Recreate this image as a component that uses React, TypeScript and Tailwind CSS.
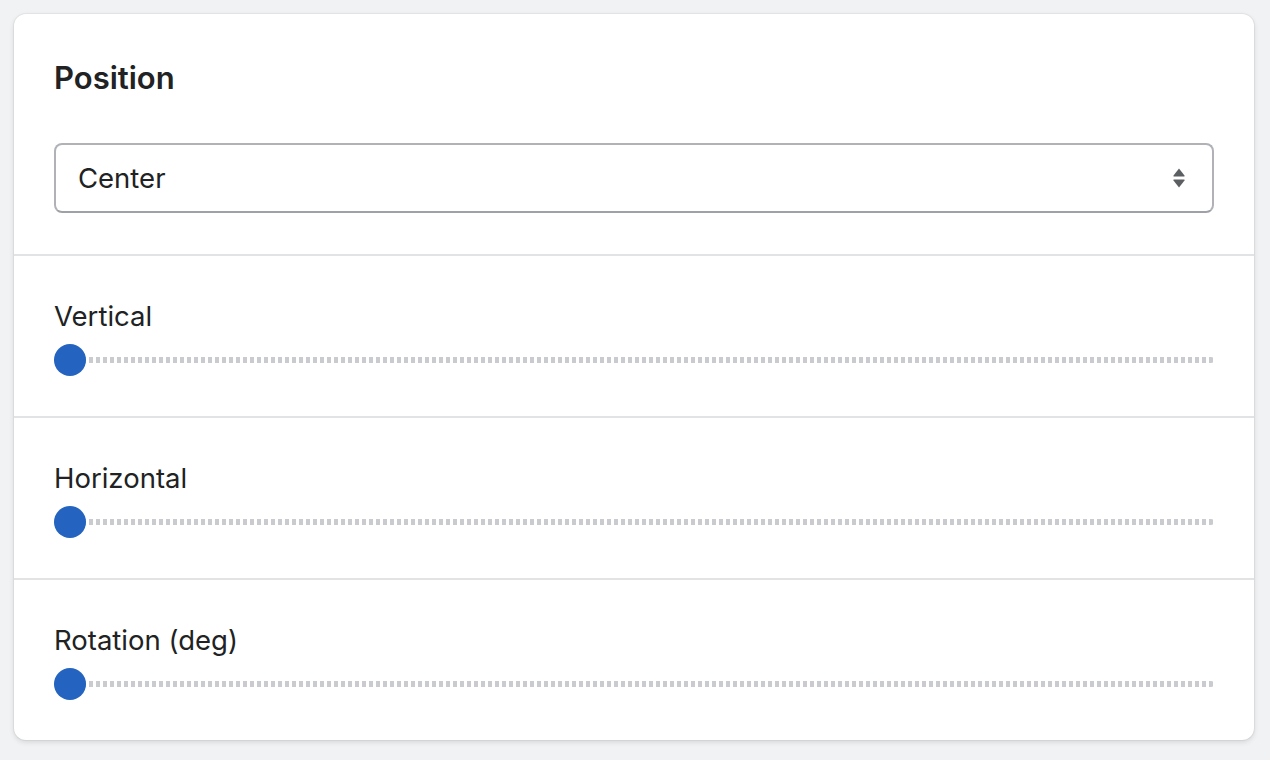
import { useState } from "react";

type SliderField = {
  label: string;
  value: number;
};

const FIELDS: SliderField[] = [
  { label: "Vertical", value: 0 },
  { label: "Horizontal", value: 0 },
  { label: "Rotation (deg)", value: 0 },
];

function SelectArrows() {
  return (
    <svg width="14" height="22" viewBox="0 0 14 22" className="text-[#5c5f62]">
      <path d="M7 1.5 L12.5 8.5 Q13 9.5 12 9.5 L2 9.5 Q1 9.5 1.5 8.5 Z" fill="currentColor" />
      <path d="M7 20.5 L12.5 13.5 Q13 12.5 12 12.5 L2 12.5 Q1 12.5 1.5 13.5 Z" fill="currentColor" />
    </svg>
  );
}

function DottedSlider({ value }: { value: number }) {
  const pct = Math.max(0, Math.min(100, value));
  return (
    <div className="relative h-[32px] flex items-center">
      <div className="w-full h-[6px] rounded-full bg-[repeating-linear-gradient(90deg,#c9cbcf_0px,#c9cbcf_4px,transparent_4px,transparent_7px)]" />
      <div
        className="absolute top-0 w-[32px] h-[32px] rounded-full bg-[#2463bf]"
        style={{ left: `calc(${pct}% - ${(pct / 100) * 32}px)` }}
      />
    </div>
  );
}

export default function App() {
  const [position] = useState("Center");

  return (
    <div
      className="min-h-screen bg-[#f1f2f3] pt-[14px] pl-[14px] pr-[16px] pb-[20px] text-[#202223]"
      style={{ fontFamily: "Inter, 'Noto Sans', 'Liberation Sans', sans-serif" }}
    >
      <div className="bg-white rounded-[12px] shadow-[0_0_0_1px_rgba(63,63,68,0.06),0_2px_5px_rgba(63,63,68,0.16)]">
        {/* header + select */}
        <div className="px-[40px] pt-[40px] pb-[41px]">
          <h2 className="text-[31px] leading-[48px] font-semibold">Position</h2>
          <div className="mt-[41px] h-[70px] flex items-center justify-between rounded-[8px] border-2 border-[#b0b2b8] border-b-[#9fa1a8] pl-[22px] pr-[26px]">
            <span className="text-[27.5px] leading-[32px]">{position}</span>
            <SelectArrows />
          </div>
        </div>

        {FIELDS.map((f) => (
          <div key={f.label} className="border-t-2 border-[#e1e3e5] px-[40px] pt-[40px] pb-[40px]">
            <div className="text-[27.5px] leading-[40px]">{f.label}</div>
            <div className="mt-[8px]">
              <DottedSlider value={f.value} />
            </div>
          </div>
        ))}
      </div>
    </div>
  );
}
